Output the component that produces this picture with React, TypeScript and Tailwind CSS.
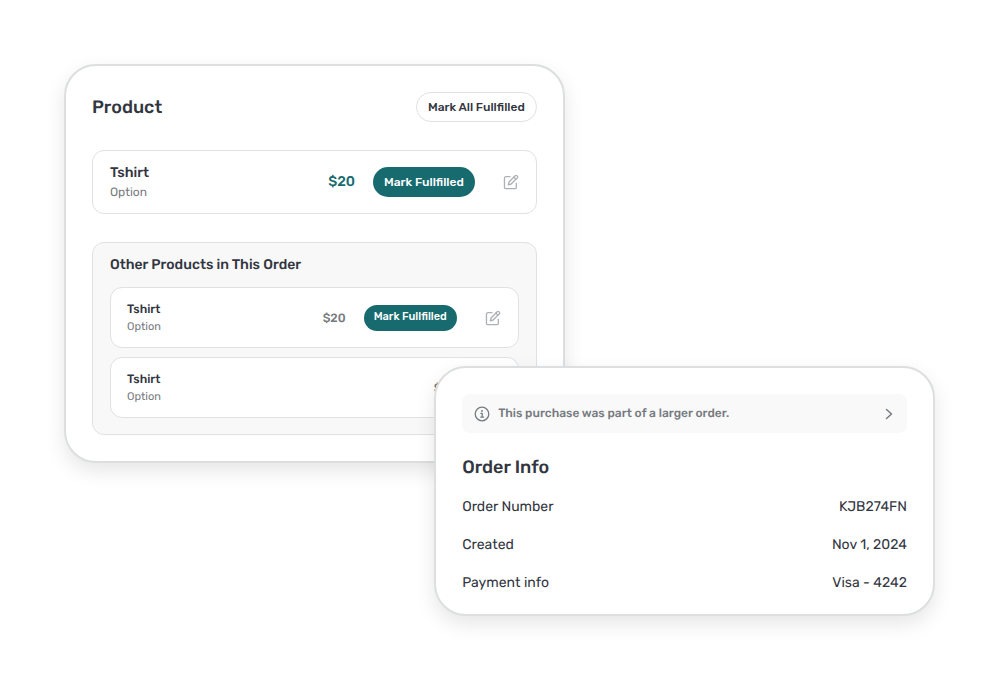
import type { ReactNode } from "react";

function EditIcon() {
  return (
    <svg
      viewBox="0 0 24 24"
      className="size-4"
      fill="none"
      stroke="currentColor"
      strokeWidth="2"
      strokeLinecap="round"
      strokeLinejoin="round"
      aria-hidden="true"
    >
      <path d="M10.5 4H4.5A2.3 2.3 0 0 0 2.2 6.3V19.7A2.3 2.3 0 0 0 4.5 22H17.7A2.3 2.3 0 0 0 20 19.7V14" />
      <path d="M18.3 2.7a2.2 2.2 0 0 1 3.1 3.1L12.2 15 8 16.2 9.1 11.9z" />
      <path d="M16.3 4.7l3.1 3.1" />
    </svg>
  );
}

function InfoIcon() {
  return (
    <svg
      viewBox="0 0 16 16"
      className="size-4 shrink-0"
      fill="none"
      stroke="currentColor"
      strokeWidth="1.3"
      strokeLinecap="round"
      strokeLinejoin="round"
      aria-hidden="true"
    >
      <circle cx="8" cy="8" r="6.8" />
      <path d="M6.9 7.4H8.2V11M6.7 11.1H9.6" />
      <circle cx="8" cy="5" r="0.9" fill="currentColor" stroke="none" />
    </svg>
  );
}

function ChevronIcon() {
  return (
    <svg
      viewBox="0 0 8 12"
      className="h-3 w-2"
      fill="none"
      stroke="currentColor"
      strokeWidth="1.5"
      strokeLinecap="round"
      strokeLinejoin="round"
      aria-hidden="true"
    >
      <path d="M1.5 1.5L6.5 6 1.5 10.5" />
    </svg>
  );
}

function Card({ className, children }: { className: string; children: ReactNode }) {
  return (
    <section
      className={`rounded-[32px] border-2 border-[#dcdedf] bg-white px-[26px] shadow-[0_8px_20px_rgba(0,0,0,0.1)] ${className}`}
    >
      {children}
    </section>
  );
}

function OrderItem({ fulfillable }: { fulfillable: boolean }) {
  return (
    <li className="flex items-center rounded-xl border border-[#dfe1e2] bg-white py-3 pr-[17px] pl-4">
      <div className="grow">
        <h4 className="text-xs leading-[18px] font-medium">Tshirt</h4>
        <p className="text-[11px] leading-[17px] text-[#777b80]">Option</p>
      </div>
      <span className="text-xs font-medium text-[#777b80]">$20</span>
      {fulfillable && (
        <button
          type="button"
          className="ml-[18px] h-[26px] rounded-full bg-[#176b6f] px-[10px] text-[11px] font-medium text-white"
        >
          Mark Fullfilled
        </button>
      )}
      <button type="button" aria-label="Edit item" className="ml-7 text-[#adb0b5]">
        <EditIcon />
      </button>
    </li>
  );
}

const details = [
  { label: "Order Number", value: "KJB274FN" },
  { label: "Created", value: "Nov 1, 2024" },
  { label: "Payment info", value: "Visa - 4242" },
];

export default function App() {
  return (
    <main className="flex min-h-screen flex-col bg-white py-16 pr-[65px] pl-16 font-[Rubik,Roboto,sans-serif] text-[#32363f] [text-rendering:geometricPrecision]">
      <Card className="w-[57.5%] self-start py-[26px]">
        <header className="flex items-center justify-between">
          <h2 className="text-lg leading-[30px] font-medium">Product</h2>
          <button
            type="button"
            className="h-[30px] rounded-full border border-[#dfe1e2] px-[11px] text-xs font-medium"
          >
            Mark All Fullfilled
          </button>
        </header>

        <article className="mt-7 flex items-center rounded-xl border border-[#dfe1e2] px-[17px] py-3">
          <div className="grow">
            <h3 className="text-sm leading-5 font-medium">Tshirt</h3>
            <p className="text-xs leading-[18px] text-[#777b80]">Option</p>
          </div>
          <span className="text-sm font-medium text-[#176b6f]">$20</span>
          <button
            type="button"
            className="ml-[18px] h-[30px] rounded-full bg-[#176b6f] px-[11px] text-xs font-medium text-white"
          >
            Mark Fullfilled
          </button>
          <button type="button" aria-label="Edit product" className="ml-7 text-[#adb0b5]">
            <EditIcon />
          </button>
        </article>

        <section className="mt-7 rounded-xl border border-[#dfe1e2] bg-[#f8f8f9] px-[17px] pt-3 pb-4">
          <h3 className="text-sm leading-5 font-medium">Other Products in This Order</h3>
          <ul className="mt-3 flex flex-col gap-[9px]">
            <OrderItem fulfillable />
            <OrderItem fulfillable={false} />
          </ul>
        </section>
      </Card>

      <Card className="relative -mt-[97px] w-[57.5%] self-end pt-[26px] pb-3">
        <a
          href="#order"
          className="flex items-center gap-2 rounded-lg bg-[#f9f9fa] py-[10px] pr-[14px] pl-3 text-[#777b80]"
        >
          <InfoIcon />
          <span className="grow text-xs leading-[19px] font-medium">
            This purchase was part of a larger order.
          </span>
          <ChevronIcon />
        </a>
        <h2 className="mt-5 text-lg leading-7 font-medium">Order Info</h2>
        <dl className="mt-[7px]">
          {details.map(({ label, value }) => (
            <div key={label} className="flex justify-between text-sm leading-[38px]">
              <dt>{label}</dt>
              <dd>{value}</dd>
            </div>
          ))}
        </dl>
      </Card>
    </main>
  );
}
